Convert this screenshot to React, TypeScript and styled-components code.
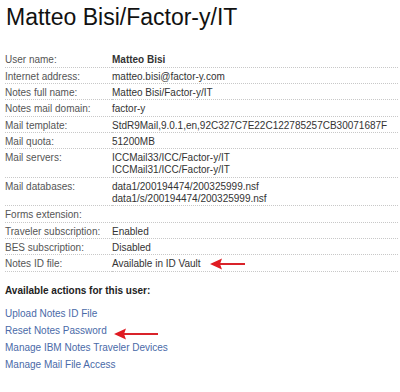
import React from 'react';
import styled, { createGlobalStyle } from 'styled-components';

const GlobalStyle = createGlobalStyle`
  html, body {
    margin: 0;
    padding: 0;
    background: #fff;
  }
  body {
    font-family: 'Liberation Sans', Arial, sans-serif;
  }
`;

const Page = styled.div`
  position: relative;
  width: 400px;
  height: 392px;
  padding: 4px 2px 0 5px;
  box-sizing: border-box;
  overflow: hidden;
`;

const Title = styled.h1`
  margin: 0 0 21.4px 1px;
  font-size: 23px;
  line-height: 26px;
  font-weight: normal;
  color: #111;
`;

const InfoTable = styled.div`
  display: grid;
  grid-template-columns: 107px 1fr;
  font-size: 10px;
`;

const Cell = styled.div<{ $label?: boolean; $strong?: boolean }>`
  padding-top: 3px;
  line-height: 12.3px;
  border-bottom: 1px dotted #c8c8c8;
  color: ${p => (p.$label ? '#555' : '#333')};
  font-weight: ${p => (p.$strong ? 'bold' : 'normal')};
  white-space: nowrap;
`;

const ActionsHeading = styled.div`
  margin-top: 13px;
  font-size: 10px;
  line-height: 12px;
  font-weight: bold;
  color: #222;
`;

const ActionList = styled.div`
  display: flex;
  flex-direction: column;
  margin-top: 9.8px;
`;

const ActionLink = styled.a`
  font-size: 10px;
  line-height: 16.9px;
  color: #4a6aa8;
  text-decoration: none;
  cursor: pointer;
`;

const Arrow = styled.svg<{ $x: number; $y: number }>`
  position: absolute;
  left: ${p => p.$x}px;
  top: ${p => p.$y}px;
`;

const rows: Array<{ label: string; values: string[]; strong?: boolean }> = [
  { label: 'User name:', values: ['Matteo Bisi'], strong: true },
  { label: 'Internet address:', values: ['matteo.bisi@factor-y.com'] },
  { label: 'Notes full name:', values: ['Matteo Bisi/Factor-y/IT'] },
  { label: 'Notes mail domain:', values: ['factor-y'] },
  {
    label: 'Mail template:',
    values: ['StdR9Mail,9.0.1,en,92C327C7E22C122785257CB30071687F'],
  },
  { label: 'Mail quota:', values: ['51200MB'] },
  {
    label: 'Mail servers:',
    values: ['ICCMail33/ICC/Factor-y/IT', 'ICCMail31/ICC/Factor-y/IT'],
  },
  {
    label: 'Mail databases:',
    values: ['data1/200194474/200325999.nsf', 'data1/s/200194474/200325999.nsf'],
  },
  { label: 'Forms extension:', values: [''] },
  { label: 'Traveler subscription:', values: ['Enabled'] },
  { label: 'BES subscription:', values: ['Disabled'] },
  { label: 'Notes ID file:', values: ['Available in ID Vault'] },
];

const actions = [
  'Upload Notes ID File',
  'Reset Notes Password',
  'Manage IBM Notes Traveler Devices',
  'Manage Mail File Access',
];

// red annotation arrow pointing left, drawn over the page
const RedArrow: React.FC<{ x: number; y: number; length: number }> = ({
  x,
  y,
  length,
}) => (
  <Arrow $x={x} $y={y - 6} width={length} height={12} viewBox={`0 0 ${length} 12`}>
    <line x1={10} y1={6} x2={length} y2={6} stroke='#d9232a' strokeWidth={2} />
    <polygon points='0,6 12,0.5 10,6 12,11.5' fill='#e01b22' />
  </Arrow>
);

export default function App() {
  return (
    <Page>
      <GlobalStyle />
      <Title>Matteo Bisi/Factor-y/IT</Title>
      <InfoTable>
        {rows.map(row => (
          <React.Fragment key={row.label}>
            <Cell $label>{row.label}</Cell>
            <Cell $strong={row.strong}>
              {row.values.map((v, i) => (
                <div key={i}>{v || '\u00a0'}</div>
              ))}
            </Cell>
          </React.Fragment>
        ))}
      </InfoTable>
      <ActionsHeading>Available actions for this user:</ActionsHeading>
      <ActionList>
        {actions.map(a => (
          <ActionLink key={a}>{a}</ActionLink>
        ))}
      </ActionList>
      <RedArrow x={210} y={264} length={35} />
      <RedArrow x={114} y={334} length={44} />
    </Page>
  );
}
